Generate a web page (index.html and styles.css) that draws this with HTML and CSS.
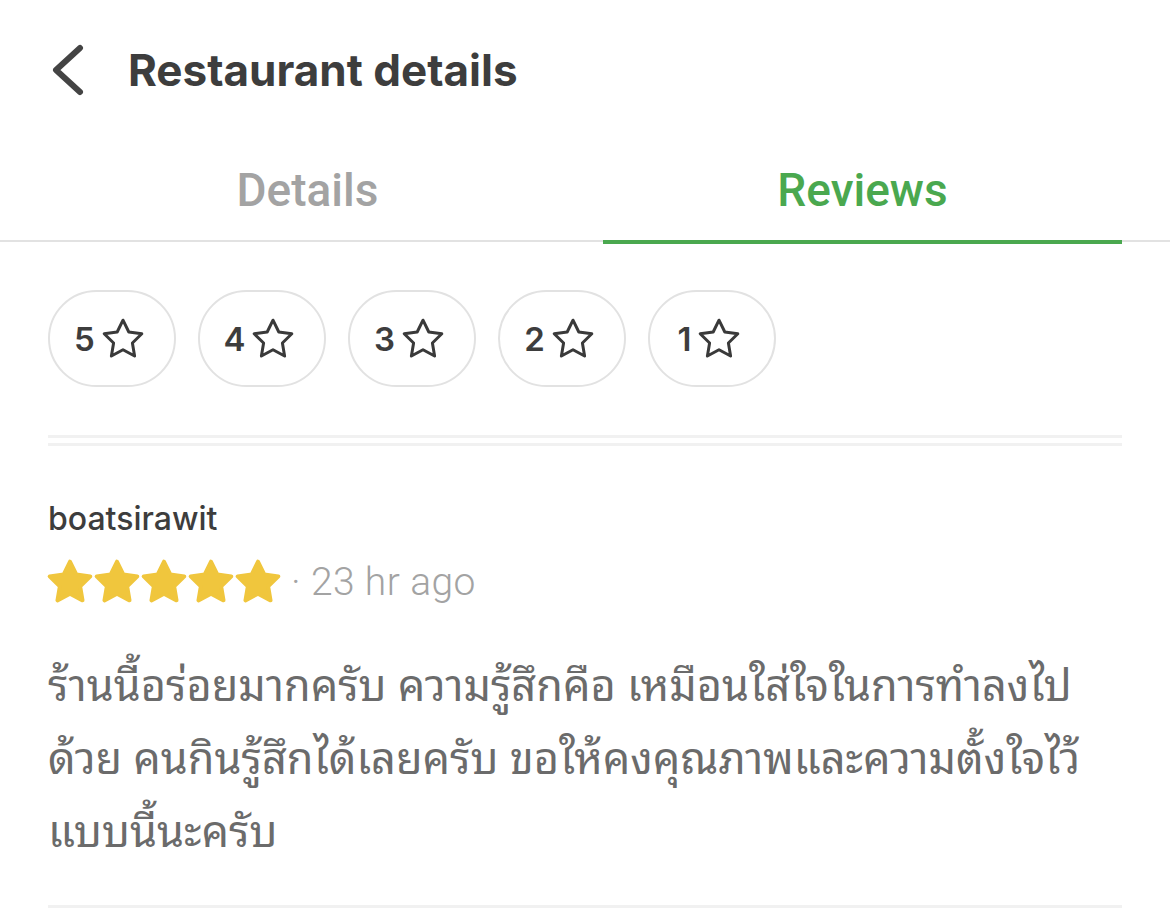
FILE: index.html
```html
<!DOCTYPE html>
<html lang="th">

<head>
    <meta charset="UTF-8">
    <meta name="viewport" content="width=device-width, initial-scale=1.0">
    <title>Restaurant details</title>
    <link rel="stylesheet" href="styles.css">
</head>

<body>
    <header class="topbar">
        <button class="back-button" aria-label="Back">
            <svg width="40" height="52" viewBox="0 0 40 52">
                <path d="M32 4 L8 26 L32 48" fill="none" stroke="#444" stroke-width="6" stroke-linecap="round" stroke-linejoin="round" />
            </svg>
        </button>
        <h1 class="topbar__title">Restaurant details</h1>
    </header>

    <nav class="tabs">
        <div class="tabs__item">Details</div>
        <div class="tabs__item tabs__item--active">Reviews</div>
    </nav>

    <main class="content">
        <div class="filters">
            <button class="chip">5 <span class="chip__star"></span></button>
            <button class="chip">4 <span class="chip__star"></span></button>
            <button class="chip">3 <span class="chip__star"></span></button>
            <button class="chip">2 <span class="chip__star"></span></button>
            <button class="chip">1 <span class="chip__star"></span></button>
        </div>

        <div class="separator"></div>

        <article class="review">
            <div class="review__author">boatsirawit</div>
            <div class="review__meta">
                <div class="review__stars">
                    <span class="star-fill"></span>
                    <span class="star-fill"></span>
                    <span class="star-fill"></span>
                    <span class="star-fill"></span>
                    <span class="star-fill"></span>
                </div>
                <span class="review__time">· 23 hr ago</span>
            </div>
            <p class="review__text">ร้านนี้อร่อยมากครับ ความรู้สึกคือ เหมือนใส่ใจในการทำลงไป<br>ด้วย คนกินรู้สึกได้เลยครับ ขอให้คงคุณภาพและความตั้งใจไว้<br>แบบนี้นะครับ</p>
        </article>
    </main>

    <svg width="0" height="0" class="defs">
        <defs>
            <path id="star" d="M12 2.6l2.9 5.9 6.5.9-4.7 4.6 1.1 6.5L12 17.4l-5.8 3.1 1.1-6.5-4.7-4.6 6.5-.9z" />
        </defs>
    </svg>

    <script>
        // draw stars into the placeholders
        document.querySelectorAll('.chip__star').forEach((el) => {
            el.innerHTML = '<svg width="48" height="48" viewBox="0 0 24 24"><use href="#star" fill="none" stroke="#3a3a3a" stroke-width="1.5" stroke-linejoin="round"/></svg>';
        });
        document.querySelectorAll('.star-fill').forEach((el) => {
            el.innerHTML = '<svg width="52" height="52" viewBox="0 0 24 24"><use href="#star" fill="#f0c63d" stroke="#f0c63d" stroke-width="1.8" stroke-linejoin="round"/></svg>';
        });
    </script>
</body>

</html>
```

FILE: styles.css
```css
:root {
    --color-text: #3d3d3d;
    --color-muted: #a3a3a3;
    --color-body: #6b6b6b;
    --color-green: #4aa84f;
    --color-line: #e2e2e2;
    --color-line-light: #f1f1f1;
}

body {
    margin: 0;
    background-color: #fff;
    color: var(--color-text);
    font-family: 'Inter', 'Noto Sans', sans-serif;
}

.defs {
    position: absolute;
}

.topbar {
    display: flex;
    align-items: center;
    height: 140px;
    padding: 0 48px;
}

.back-button {
    display: flex;
    align-items: center;
    padding: 0;
    margin: 0 40px 0 0;
    border: none;
    background: none;
}

.topbar__title {
    margin: 0;
    font-size: 44px;
    font-weight: 700;
    color: var(--color-text);
}

.tabs {
    display: grid;
    grid-template-columns: 591px 519px;
    padding-left: 12px;
    border-bottom: 2px solid var(--color-line);
}

.tabs__item {
    height: 104px;
    display: flex;
    align-items: center;
    justify-content: center;
    font-family: 'Roboto', sans-serif;
    font-size: 46px;
    font-weight: 500;
    color: var(--color-muted);
    border-bottom: 4px solid transparent;
    margin-bottom: -4px;
    box-sizing: border-box;
}

.tabs__item--active {
    color: var(--color-green);
    border-bottom-color: var(--color-green);
}

.content {
    padding: 0 48px;
}

.filters {
    display: flex;
    gap: 22px;
    padding: 48px 0;
}

.chip {
    display: flex;
    align-items: center;
    justify-content: center;
    gap: 4px;
    width: 128px;
    height: 97px;
    border: 2px solid var(--color-line);
    border-radius: 50px;
    background: #fff;
    font-family: 'Inter', sans-serif;
    font-size: 33px;
    font-weight: 600;
    color: var(--color-text);
    padding: 0 3px 0 0;
}

.chip__star {
    display: flex;
}

.separator {
    height: 5px;
    border-top: 3px solid var(--color-line-light);
    border-bottom: 3px solid var(--color-line-light);
}

.review {
    padding: 53px 0 0;
    border-bottom: 3px solid var(--color-line-light);
}

.review__author {
    font-size: 32px;
    font-weight: 500;
    color: var(--color-text);
    line-height: 40px;
}

.review__meta {
    display: flex;
    align-items: center;
    margin-top: 17px;
}

.review__stars {
    display: flex;
    margin-left: -4px;
}

.star-fill {
    display: flex;
    margin-right: -5px;
}

.review__time {
    margin-left: 12px;
    font-family: 'Roboto', sans-serif;
    font-size: 39px;
    font-weight: 300;
    letter-spacing: 0.4px;
    color: var(--color-muted);
}

.review__text {
    margin: 37px 0 0;
    padding-bottom: 41px;
    font-family: 'Noto Sans Thai Looped', 'Noto Sans Thai', 'Noto Sans', sans-serif;
    font-size: 43.3px;
    line-height: 73px;
    color: var(--color-body);
}
```
